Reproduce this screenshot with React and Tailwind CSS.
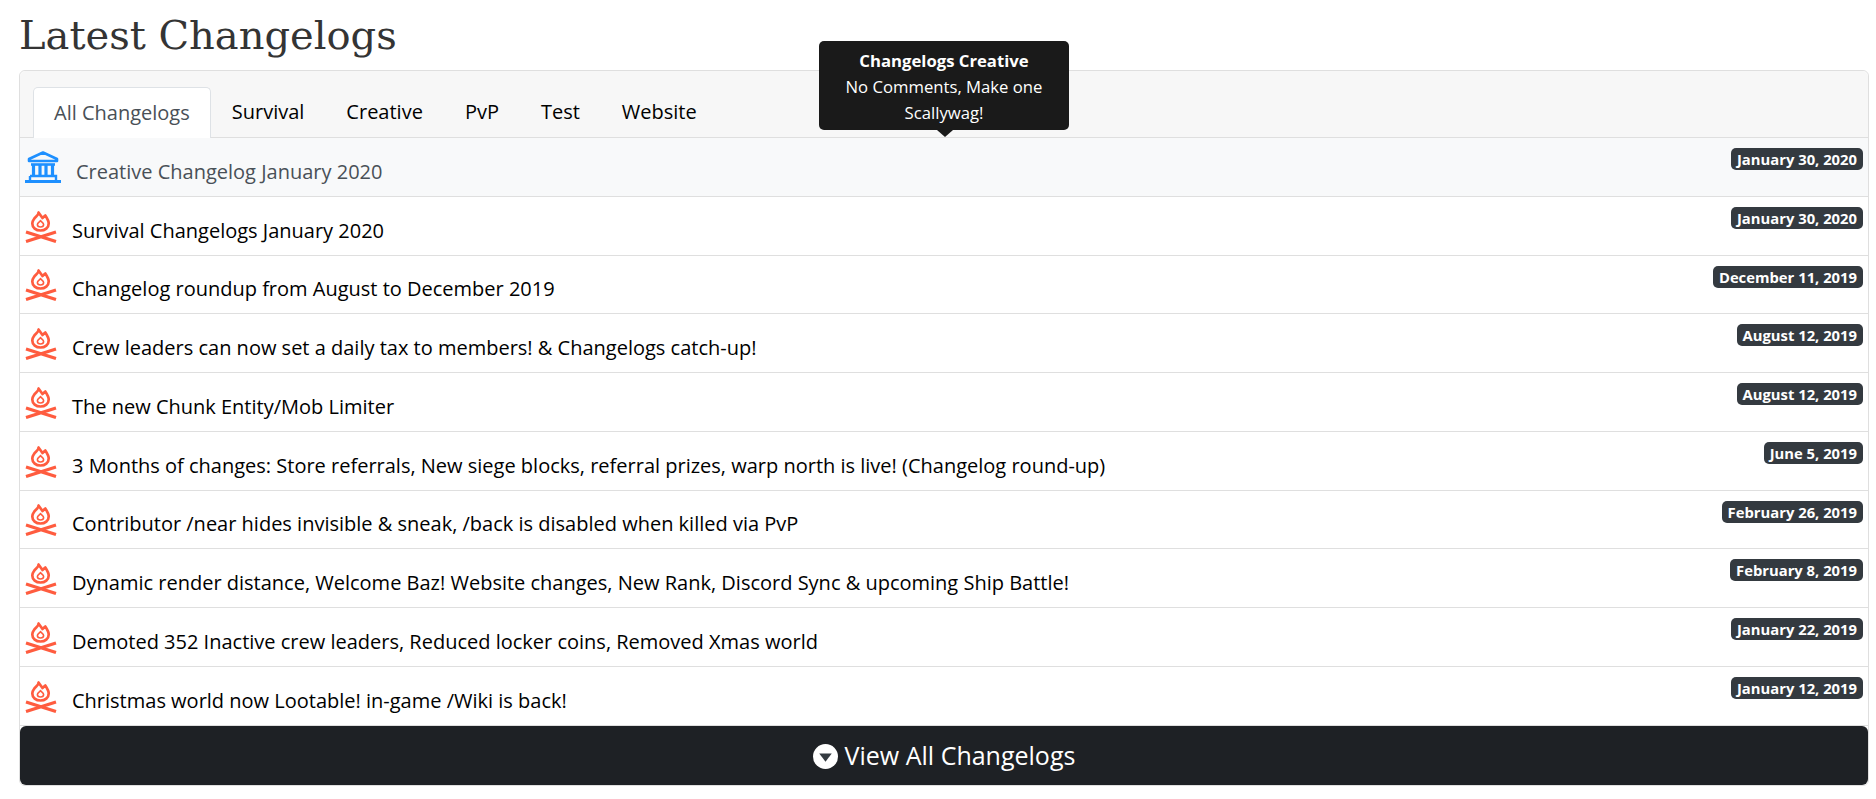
const tabs = ['Survival', 'Creative', 'PvP', 'Test', 'Website'];

const logs = [
  ['Survival Changelogs January 2020', 'January 30, 2020'],
  ['Changelog roundup from August to December 2019', 'December 11, 2019'],
  ['Crew leaders can now set a daily tax to members! & Changelogs catch-up!', 'August 12, 2019'],
  ['The new Chunk Entity/Mob Limiter', 'August 12, 2019'],
  ['3 Months of changes: Store referrals, New siege blocks, referral prizes, warp north is live! (Changelog round-up)', 'June 5, 2019'],
  ['Contributor /near hides invisible & sneak, /back is disabled when killed via PvP', 'February 26, 2019'],
  ['Dynamic render distance, Welcome Baz! Website changes, New Rank, Discord Sync & upcoming Ship Battle!', 'February 8, 2019'],
  ['Demoted 352 Inactive crew leaders, Reduced locker coins, Removed Xmas world', 'January 22, 2019'],
  ['Christmas world now Lootable! in-game /Wiki is back!', 'January 12, 2019'],
];

function BankIcon() {
  return (
    <svg width="36" height="32" viewBox="0 0 36 32" className="shrink-0" fill="none" stroke="#1e90ff">
      <path d="M18 1.5 L32 8 V10 H4 V8 Z" strokeWidth="2.6" strokeLinejoin="round" />
      <path d="M6 13.5 H30" strokeWidth="2.6" />
      <path d="M8.5 14 V25 M15 14 V25 M21 14 V25 M27.5 14 V25" strokeWidth="3.2" />
      <path d="M5 25 H31 V29 M5 25 V29" strokeWidth="2.4" />
      <path d="M0 30.5 H36" strokeWidth="3" />
    </svg>
  );
}

function FireIcon() {
  return (
    <svg width="32" height="32" viewBox="0 0 32 32" className="shrink-0 translate-y-[1px]" fill="none" stroke="#ff5c3f" strokeWidth="2.7">
      <path d="M13.5 1.5 C14 4 10.5 5.5 9 8 C7.5 10 7.3 11.5 7.3 12.5 C7.3 16.8 11 19.5 15.5 19.5 C20 19.5 23.7 16.8 23.7 12.5 C23.7 9.5 22 7 20.3 4.5 L17.5 7 Z" strokeLinejoin="round" />
      <path d="M15.5 9.5 C16 11 18.6 11.8 18.6 13.6 C18.6 15.2 17.1 16 15.5 16 C13.9 16 12.4 15.2 12.4 13.6 C12.4 11.8 15 11 15.5 9.5 Z" strokeWidth="1.6" strokeLinejoin="round" />
      <path d="M1 21 L31 30.5 M31 21 L1 30.5" strokeWidth="3.2" />
    </svg>
  );
}

function DateBadge({ children }) {
  return (
    <span className="absolute right-[5px] top-[10px] rounded-[5px] bg-[#343a40] px-[6px] text-[14.8px] leading-[22px] font-bold text-white">
      {children}
    </span>
  );
}

export default function App() {
  return (
    <div className="bg-white pl-[19px] pr-[7px] font-['Open_Sans',sans-serif] text-[20px] text-black">
      <h1 className="h-[70px] pt-[5px] font-['DejaVu_Serif',serif] text-[40px] leading-[60px] text-[#343434]">
        Latest Changelogs
      </h1>

      <div className="relative rounded-[6px] border border-[#dfdfdf]">
        {/* Tabs */}
        <div className="flex h-[67px] items-end rounded-t-[6px] border-b border-[#dfdfdf] bg-[#f7f7f7] pl-[13px]">
          <div className="-mb-px flex h-[51px] items-center rounded-t-[5px] border border-b-0 border-[#dee2e6] bg-white px-[20px] text-[#495057]">
            All Changelogs
          </div>
          {tabs.map((t) => (
            <div key={t} className="flex h-[50px] items-center px-[21px]">{t}</div>
          ))}
        </div>

        {/* Hover tooltip */}
        <div className="absolute left-[799px] top-[-30px] z-10 w-[250px] rounded-[5px] bg-[#1a1a1a] px-[12px] pt-[6.5px] pb-[4.5px] text-center text-[16.7px] leading-[26px] text-white">
          <div className="font-bold">Changelogs Creative</div>
          <div>No Comments, Make one Scallywag!</div>
          <div className="absolute bottom-[-7px] left-1/2 -ml-[7px] border-x-[8px] border-t-[7px] border-x-transparent border-t-[#1a1a1a]"></div>
        </div>

        {/* List */}
        <div className="relative flex h-[58.75px] items-center gap-[15px] border-b border-[#dfdfdf] bg-[#f8f9fa] pl-[5px] text-[#495057]">
          <BankIcon />
          <span className="pt-[10px]">Creative Changelog January 2020</span>
          <DateBadge>January 30, 2020</DateBadge>
        </div>
        {logs.map(([title, date]) => (
          <div key={title + date} className="relative flex h-[58.75px] items-center gap-[15px] border-b border-[#dfdfdf] pl-[5px]">
            <FireIcon />
            <span className="pt-[10px]">{title}</span>
            <DateBadge>{date}</DateBadge>
          </div>
        ))}

        {/* Footer button */}
        <div className="flex h-[59px] items-center justify-center gap-[7px] rounded-[6px] bg-[#1e2125] pt-[2px] text-[25px] text-white">
          <svg width="25" height="25" viewBox="0 0 24 24">
            <circle cx="12" cy="12" r="12" fill="#fff" />
            <path d="M6 9 H18 L12 17 Z" fill="#343a40" strokeLinejoin="round" />
          </svg>
          View All Changelogs
        </div>
      </div>
    </div>
  );
}
